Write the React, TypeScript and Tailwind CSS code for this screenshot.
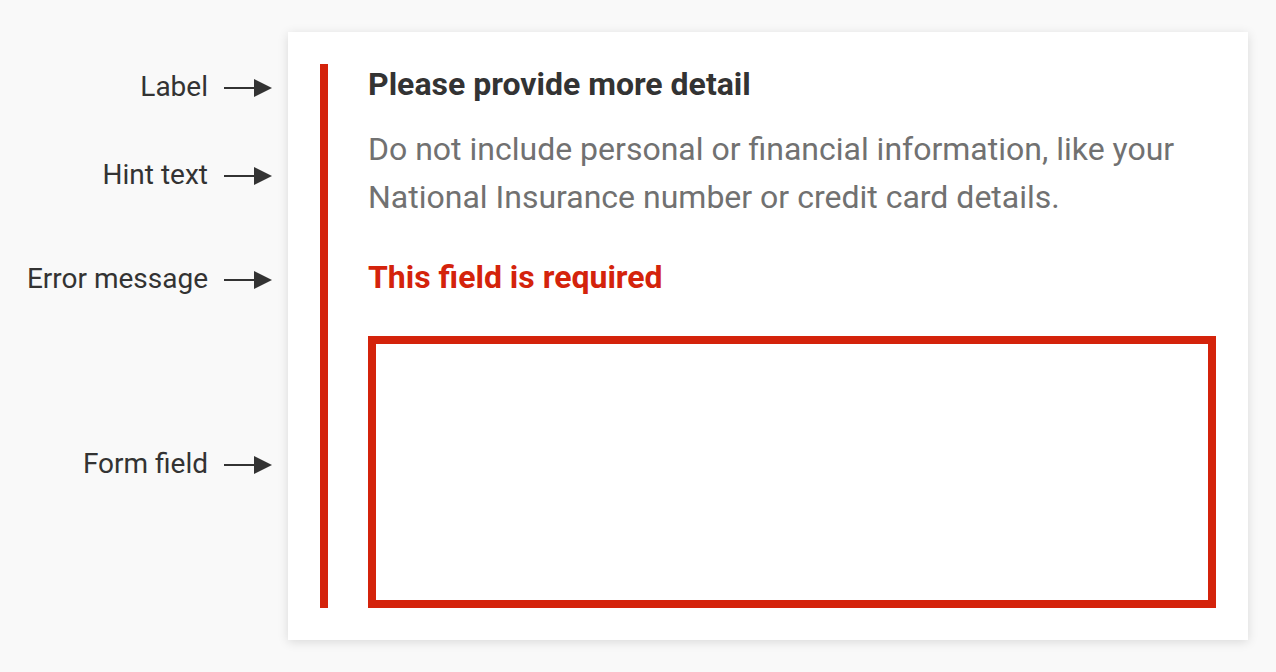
import React from "react";

function Arrow() {
  return (
    <svg width="48" height="20" viewBox="0 0 48 20" className="mt-[2px] shrink-0">
      <line x1="0" y1="10" x2="32" y2="10" stroke="#333333" strokeWidth="2" />
      <polygon points="30,1 48,10 30,19" fill="#333333" />
    </svg>
  );
}

function Note({ text, className }: { text: string; className: string }) {
  return (
    <div className={`flex h-[32px] items-center justify-end gap-4 ${className}`}>
      <span className="text-[28px] leading-[32px] text-[#333333]">{text}</span>
      <Arrow />
    </div>
  );
}

export default function App() {
  return (
    <div
      className="flex h-[672px] w-[1276px] bg-[#f9f9f9]"
      style={{ fontFamily: "Roboto, 'Liberation Sans', sans-serif" }}
    >
      <div className="flex w-[272px] flex-col pt-[71px]">
        <Note text="Label" className="" />
        <Note text="Hint text" className="mt-[56px]" />
        <Note text="Error message" className="mt-[72px]" />
        <Note text="Form field" className="mt-[153px]" />
      </div>
      <div className="ml-[16px] mt-[32px] h-[608px] w-[960px] bg-white p-8 shadow-[0_2px_10px_rgba(0,0,0,0.13)]">
        <div className="flex h-full flex-col border-l-8 border-[#d4230b] pl-10">
          <div className="text-[32px] font-bold leading-[40px] text-[#333333]">
            Please provide more detail
          </div>
          <div className="mt-[21px] text-[32px] leading-[48px] text-[#717171]">
            Do not include personal or financial information, like your
            <br />
            National Insurance number or credit card details.
          </div>
          <div className="mt-[36px] text-[32px] font-bold leading-[40px] text-[#d4230b]">
            This field is required
          </div>
          <div className="mt-[39px] flex-1 border-8 border-[#d4230b] bg-white" />
        </div>
      </div>
    </div>
  );
}
